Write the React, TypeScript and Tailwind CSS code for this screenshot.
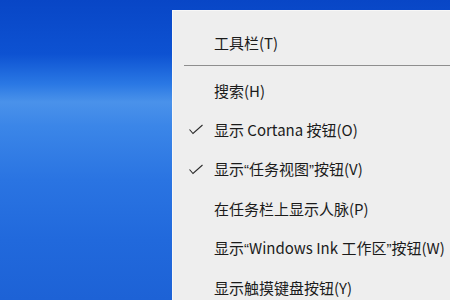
import React from 'react';

type Item = { label: string; checked?: boolean };

const items: Item[] = [
  { label: '搜索(H)' },
  { label: '显示 Cortana 按钮(O)', checked: true },
  { label: '显示“任务视图”按钮(V)', checked: true },
  { label: '在任务栏上显示人脉(P)' },
  { label: '显示“Windows Ink 工作区”按钮(W)' },
  { label: '显示触摸键盘按钮(Y)' },
];

// the CJK font draws curly quotes full-width; the reference uses narrow ones
function Label({ text }: { text: string }) {
  const parts = text.split(/([“”])/);
  return (
    <span className="whitespace-nowrap">
      {parts.map((p, i) =>
        p === '“' || p === '”' ? (
          <span key={i} style={{ fontFamily: '"Liberation Sans", sans-serif' }}>
            {p}
          </span>
        ) : (
          <React.Fragment key={i}>{p}</React.Fragment>
        )
      )}
    </span>
  );
}

function Check() {
  return (
    <svg width="16" height="12" viewBox="0 0 16 12" className="absolute left-[15px] top-1/2 -translate-y-1/2">
      <polyline points="1.5,5.5 5,9.5 14.5,1" fill="none" stroke="#2b2b2b" strokeWidth="1.1" />
    </svg>
  );
}

function MenuRow({ item }: { item: Item }) {
  return (
    <div className="relative flex h-[39.5px] items-center pl-[41px]">
      {item.checked && <Check />}
      <Label text={item.label} />
    </div>
  );
}

export default function App() {
  return (
    <div className="relative h-[300px] w-[450px] overflow-hidden bg-[linear-gradient(180deg,#0846c6_0%,#0d52d2_18%,#2a78e4_28%,#4a92ea_34%,#3b86e8_42%,#2a74e2_60%,#2169dc_80%,#1d62d6_100%)]">
      {/* context menu over the desktop */}
      <div
        className="absolute left-[172px] top-[10px] w-[290px] border border-[#f7f7f7] bg-[#eeeeee] pt-[12px] text-[15px] text-[#1b1b1b]"
        style={{ fontFamily: '"Noto Sans CJK SC", "Noto Sans", sans-serif' }}
      >
        <MenuRow item={{ label: '工具栏(T)' }} />
        <div className="flex h-[8.5px] items-start pl-[11px] pt-[2.5px]">
          <div className="h-px w-full bg-[#8e8e8e]" />
        </div>
        {items.map((it) => (
          <MenuRow key={it.label} item={it} />
        ))}
      </div>
    </div>
  );
}
